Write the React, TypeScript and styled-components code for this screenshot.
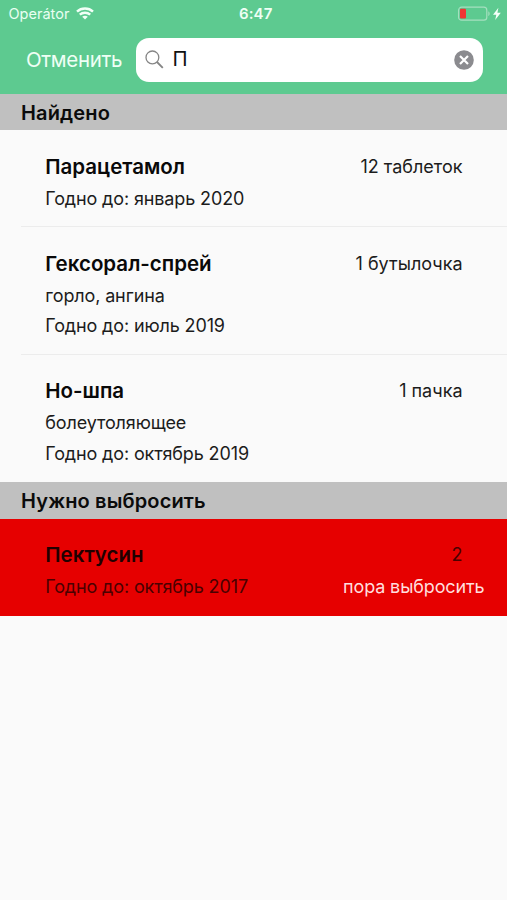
import React from "react";
import styled, { createGlobalStyle } from "styled-components";

const GlobalStyle = createGlobalStyle`
  * { box-sizing: border-box; }
  body { margin: 0; background: #fafafa; font-family: Inter, "Liberation Sans", sans-serif; color: #111; }
`;

const Screen = styled.div`
  width: 507px;
  height: 900px;
  overflow: hidden;
  background: #fafafa;
`;

const Header = styled.header`
  height: 93.6px;
  background: #5dca90;
  color: #fff;
`;

const StatusBar = styled.div`
  height: 27px;
  padding: 0 5px 0 8.5px;
  display: grid;
  grid-template-columns: 1fr auto 1fr;
  align-items: center;
`;

const Carrier = styled.div`
  display: flex;
  align-items: center;
  gap: 7px;
  font-size: 14.5px;
  letter-spacing: 0.02px;
  color: #e9fff2;
  svg { display: block; margin-top: -1px; }
`;

const Clock = styled.div`
  padding-left: 1px;
  font-size: 15px;
  font-weight: 600;
  letter-spacing: 0.1px;
  color: #effff5;
`;

const Power = styled.div`
  display: flex;
  justify-content: flex-end;
  svg { display: block; }
`;

const SearchBar = styled.div`
  display: flex;
  align-items: center;
  padding: 11px 24.5px 0 26px;
`;

const Cancel = styled.button`
  width: 110px;
  padding: 0;
  border: 0;
  background: none;
  color: #effff5;
  text-align: left;
  font: 400 20.5px/25px Inter, sans-serif;
  letter-spacing: -0.35px;
`;

const Field = styled.div`
  flex: 1;
  height: 43.5px;
  border-radius: 13px;
  background: #fff;
  color: #111;
  display: flex;
  align-items: center;
  padding: 0 8.5px 0 9px;
  svg { display: block; }
`;

const Query = styled.span`
  flex: 1;
  padding: 0 0 1px 8.5px;
  font-size: 20.3px;
  line-height: 26px;
`;

const SectionTitle = styled.h2`
  margin: 0;
  height: 36.6px;
  padding: 2px 0 0 21px;
  display: flex;
  align-items: center;
  background: #c0c0c0;
  color: #0b0b0b;
  font-size: 20px;
  font-weight: 600;
  letter-spacing: 0.14px;
`;

const Item = styled.article<{ $height: number; $expired?: boolean; $divided?: boolean }>`
  height: ${(p) => p.$height}px;
  padding: 20.4px 44.5px 0 45.3px;
  background: ${(p) =>
    p.$expired
      ? "#e60000"
      : p.$divided
        ? "linear-gradient(#ececec, #ececec) 21px 100% / 486px 1px no-repeat #fafafa"
        : "#fafafa"};
  color: ${(p) => (p.$expired ? "#4a0000" : "#1c1c1c")};
`;

const Line = styled.div<{ $head?: boolean }>`
  height: ${(p) => (p.$head ? 32.5 : 30.5)}px;
  padding-bottom: ${(p) => (p.$head ? 1 : 0)}px;
  display: flex;
  justify-content: space-between;
  align-items: center;
  white-space: nowrap;
  font-size: 18px;
  letter-spacing: ${(p) => (p.$head ? 0 : -0.13)}px;
`;

const Name = styled.h3<{ $expired?: boolean }>`
  margin: 0;
  font-size: 20.5px;
  font-weight: 600;
  color: ${(p) => (p.$expired ? "#1f0000" : "#090909")};
`;

const Warning = styled.span`
  margin-right: -22px;
  color: #ffdede;
`;

type Medicine = { name: string; amount: string; note?: string; until: string; height: number; expired?: boolean; divided?: boolean };

const found: Medicine[] = [
  { name: "Парацетамол", amount: "12 таблеток", until: "январь 2020", height: 97, divided: true },
  { name: "Гексорал-спрей", amount: "1 бутылочка", note: "горло, ангина", until: "июль 2019", height: 127.5, divided: true },
  { name: "Но-шпа", amount: "1 пачка", note: "болеутоляющее", until: "октябрь 2019", height: 127.3 },
];

const discard: Medicine[] = [
  { name: "Пектусин", amount: "2", until: "октябрь 2017", height: 97, expired: true },
];

const MedicineItem = ({ item }: { item: Medicine }) => (
  <Item $height={item.height} $expired={item.expired} $divided={item.divided}>
    <Line $head>
      <Name $expired={item.expired}>{item.name}</Name>
      <span>{item.amount}</span>
    </Line>
    {item.note && <Line>{item.note}</Line>}
    <Line>
      <span>Годно до: {item.until}</span>
      {item.expired && <Warning>пора выбросить</Warning>}
    </Line>
  </Item>
);

const WifiIcon = () => (
  <svg width="18" height="13" viewBox="0 0 18 13" fill="none" stroke="#f2fff7" strokeWidth="2.4">
    <path d="M1 4.6C5.4.4 12.6.4 17 4.6" />
    <path d="M3.8 7.7c2.9-2.7 7.5-2.7 10.4 0" />
    <path d="M9 12.6 6.2 9.8c1.6-1.3 4-1.3 5.6 0z" fill="#f2fff7" stroke="none" />
  </svg>
);

const BatteryIcon = () => (
  <svg width="44" height="16" viewBox="0 0 44 16">
    <rect x="0.6" y="1.2" width="28.2" height="13" rx="3" fill="none" stroke="#a5dfbf" strokeWidth="1.2" />
    <path d="M30.3 5.3c1.8.7 1.8 4.1 0 4.8z" fill="#a5dfbf" />
    <rect x="2" y="2.8" width="6" height="9.8" rx="1" fill="#ef3434" />
    <path d="M40.4 1.8 35 8.7h3.3l-1.1 5.4 5.6-7.3h-3.4z" fill="#f5fff9" />
  </svg>
);

const SearchIcon = () => (
  <svg width="19" height="19" viewBox="0 0 19 19" fill="none" stroke="#858585">
    <circle cx="7.4" cy="7.4" r="6.4" strokeWidth="1.3" />
    <path d="m12 12 5.8 5.8" strokeWidth="1.8" />
  </svg>
);

const ClearIcon = () => (
  <svg width="20" height="20" viewBox="0 0 20 20">
    <circle cx="10" cy="10" r="9.8" fill="#8b8b8f" />
    <path d="m6 6 8 8m0-8-8 8" stroke="#fff" strokeWidth="2.2" />
  </svg>
);

export default function App() {
  return (
    <>
      <GlobalStyle />
      <Screen>
        <Header>
          <StatusBar>
            <Carrier>Operátor<WifiIcon /></Carrier>
            <Clock>6:47</Clock>
            <Power><BatteryIcon /></Power>
          </StatusBar>
          <SearchBar>
            <Cancel>Отменить</Cancel>
            <Field>
              <SearchIcon />
              <Query>П</Query>
              <ClearIcon />
            </Field>
          </SearchBar>
        </Header>
        <SectionTitle>Найдено</SectionTitle>
        {found.map((item) => <MedicineItem key={item.name} item={item} />)}
        <SectionTitle>Нужно выбросить</SectionTitle>
        {discard.map((item) => <MedicineItem key={item.name} item={item} />)}
      </Screen>
    </>
  );
}
